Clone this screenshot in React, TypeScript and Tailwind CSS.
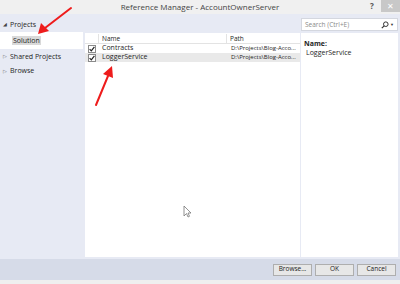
import React from 'react';

const font = { fontFamily: '"Open Sans", "Noto Sans", sans-serif' };

function Check() {
  return (
    <span className="w-[8px] h-[8px] border border-[#8a8a8a] bg-white flex items-center justify-center">
      <svg width="6" height="6" viewBox="0 0 6 6">
        <path d="M0.6 3.2 L2.3 4.9 L5.4 0.8" stroke="#222" strokeWidth="1.2" fill="none" />
      </svg>
    </span>
  );
}

const rows = [
  { name: 'Contracts', path: 'D:\\Projects\\Blog-Acco...', selected: false },
  { name: 'LoggerService', path: 'D:\\Projects\\Blog-Acco...', selected: true },
];

export default function App() {
  return (
    <div
      className="relative w-[400px] h-[284px] overflow-hidden bg-[#e7eaf4] flex flex-col text-[7px] text-[#1e1e1e]"
      style={font}
    >
      {/* Title bar */}
      <div className="h-[14px] shrink-0 bg-[#f0f0f0] flex items-center relative">
        <div className="flex-1 text-center text-[8px] text-[#444] leading-none">
          Reference Manager - AccountOwnerServer
        </div>
        <span className="absolute left-[370px] top-[2px] text-[8px] font-bold text-[#555] leading-none">?</span>
        <div className="absolute right-0 top-0 w-[19px] h-[12px] bg-[#c8c8c8] flex items-center justify-center">
          <span className="text-white text-[8px] leading-none">✕</span>
        </div>
      </div>

      {/* Body */}
      <div className="flex flex-1 min-h-0">
        {/* Left nav */}
        <div className="w-[83px] shrink-0 flex flex-col pt-[5px]">
          <div className="h-[12px] flex items-center gap-[3px] pl-[3px]">
            <span className="text-[5px] text-[#444]">◢</span>
            <span>Projects</span>
          </div>
          <div className="h-[17px] bg-white flex items-center pl-[12px] mt-[1px]">
            <span className="bg-[#d9d9d9] px-[1px] leading-[9px]">Solution</span>
          </div>
          <div className="h-[14px] flex items-center gap-[3px] pl-[3px] mt-[1px]">
            <span className="text-[5px] text-[#666]">▷</span>
            <span>Shared Projects</span>
          </div>
          <div className="h-[15px] flex items-center gap-[3px] pl-[3px]">
            <span className="text-[5px] text-[#666]">▷</span>
            <span>Browse</span>
          </div>
        </div>

        {/* Main */}
        <div className="flex-1 flex flex-col pl-[2px] pr-[2px]">
          <div className="h-[19px] shrink-0 flex justify-end items-start pt-[4px]">
            <div className="w-[97px] h-[13px] bg-white border border-[#d4d7df] flex items-center justify-between px-[3px]">
              <span className="text-[#8a8a8a] text-[6.5px]">Search (Ctrl+E)</span>
              <span className="flex items-center gap-[1px] text-[#333]">
                <svg width="8" height="8" viewBox="0 0 8 8">
                  <circle cx="4.8" cy="3.2" r="2.3" stroke="#333" strokeWidth="1" fill="none" />
                  <path d="M3.2 4.8 L0.8 7.2" stroke="#333" strokeWidth="1.2" />
                </svg>
                <span className="text-[4px]">▼</span>
              </span>
            </div>
          </div>
          <div className="flex flex-1 gap-[1px] pb-[2px]">
            {/* List */}
            <div className="w-[215px] bg-white flex flex-col pt-[1px]">
              <div className="h-[10px] flex border-b border-[#e3e3e3] text-[6.5px]">
                <div className="w-[14px] border-r border-[#e3e3e3]" />
                <div className="w-[128px] border-r border-[#e3e3e3] pl-[3px] flex items-center">Name</div>
                <div className="flex-1 pl-[3px] flex items-center">Path</div>
              </div>
              {rows.map(r => (
                <div key={r.name} className={`h-[9px] flex items-center ${r.selected ? 'bg-[#e9e9e9]' : ''}`}>
                  <div className="w-[14px] flex justify-center">
                    <Check />
                  </div>
                  <div className="w-[128px] pl-[3px]">{r.name}</div>
                  <div className="flex-1 pl-[4px] text-[6px] whitespace-nowrap">{r.path}</div>
                </div>
              ))}
            </div>
            {/* Details */}
            <div className="flex-1 bg-white pt-[6px] pl-[3px] flex flex-col">
              <span className="font-bold leading-[9px]">Name:</span>
              <span className="pl-[2px] leading-[9px]">LoggerService</span>
            </div>
          </div>
        </div>
      </div>

      {/* Buttons */}
      <div className="h-[21px] shrink-0 bg-[#d6dbe8] flex items-center justify-end gap-[3px] pr-[4px]">
        {['Browse...', 'OK', 'Cancel'].map(b => (
          <button
            key={b}
            className="w-[39px] h-[12px] bg-[#e7e7e7] border border-[#aeaeae] text-[6.5px] text-[#222] leading-none flex items-center justify-center"
          >
            {b}
          </button>
        ))}
      </div>
      <div className="h-[4px] shrink-0 bg-[#efefef]" />

      {/* Annotation arrows and cursor */}
      <svg className="absolute left-0 top-0 pointer-events-none" width="400" height="284">
        <path d="M71 8 L45 28" stroke="#ee1c1c" strokeWidth="2" strokeLinecap="round" />
        <path d="M38 34 L41 23 L49 31 Z" fill="#ee1c1c" />
        <path d="M96 105 L108 76" stroke="#ee1c1c" strokeWidth="2" strokeLinecap="round" />
        <path d="M112 66 L103 74 L113 78 Z" fill="#ee1c1c" />
        <path d="M184 206 L184 216 L186.5 213.5 L188 217 L189.5 216.3 L188 213 L191 213 Z" fill="white" stroke="#777" strokeWidth="0.8" />
      </svg>
    </div>
  );
}
